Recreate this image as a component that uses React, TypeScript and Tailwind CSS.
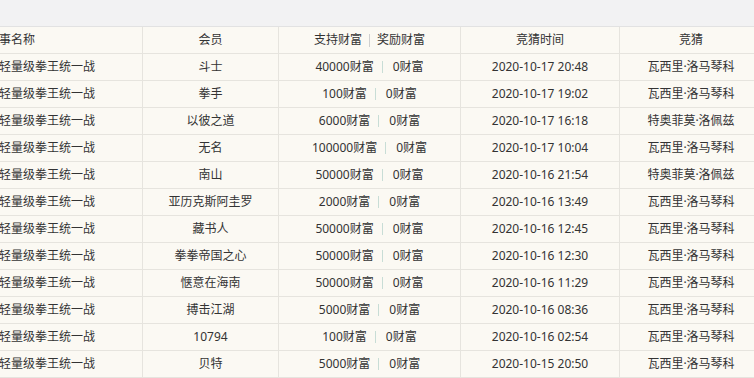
import React from "react";

type Row = { m: string; a: string; b: string; t: string; g: string };

const rows: Row[] = [
  { m: "斗士", a: "40000", b: "0", t: "2020-10-17 20:48", g: "瓦西里·洛马琴科" },
  { m: "拳手", a: "100", b: "0", t: "2020-10-17 19:02", g: "瓦西里·洛马琴科" },
  { m: "以彼之道", a: "6000", b: "0", t: "2020-10-17 16:18", g: "特奥菲莫·洛佩兹" },
  { m: "无名", a: "100000", b: "0", t: "2020-10-17 10:04", g: "瓦西里·洛马琴科" },
  { m: "南山", a: "50000", b: "0", t: "2020-10-16 21:54", g: "特奥菲莫·洛佩兹" },
  { m: "亚历克斯阿圭罗", a: "2000", b: "0", t: "2020-10-16 13:49", g: "瓦西里·洛马琴科" },
  { m: "藏书人", a: "50000", b: "0", t: "2020-10-16 12:45", g: "瓦西里·洛马琴科" },
  { m: "拳拳帝国之心", a: "50000", b: "0", t: "2020-10-16 12:30", g: "瓦西里·洛马琴科" },
  { m: "惬意在海南", a: "50000", b: "0", t: "2020-10-16 11:29", g: "瓦西里·洛马琴科" },
  { m: "搏击江湖", a: "5000", b: "0", t: "2020-10-16 08:36", g: "瓦西里·洛马琴科" },
  { m: "10794", a: "100", b: "0", t: "2020-10-16 02:54", g: "瓦西里·洛马琴科" },
  { m: "贝特", a: "5000", b: "0", t: "2020-10-15 20:50", g: "瓦西里·洛马琴科" },
];

const grid =
  "grid grid-cols-[170px_136px_182px_159px_143px] h-[27px] border-b border-[#e6e4de]";
const cell = "flex items-center justify-center border-r border-[#e6e4de] whitespace-nowrap";

export default function App() {
  return (
    <div
      className="w-[754px] h-[378px] overflow-hidden bg-[#f2f2f3] text-[12px] text-[#333]"
      style={{ fontFamily: '"Noto Sans", "Noto Sans CJK SC", sans-serif' }}
    >
      <div className="h-[26px]" />
      <div className="-ml-[27px] w-[790px] bg-[#fbf9f3] border-t border-[#e2e2e2]">
        <div className={grid}>
          <div className="flex items-center pl-[14px] border-r border-[#e6e4de] whitespace-nowrap">赛事名称</div>
          <div className={cell}>会员</div>
          <div className={cell}>
            <span>支持财富</span>
            <span className="mx-[7px] w-px h-[13px] bg-[#cfcfcf]" />
            <span>奖励财富</span>
          </div>
          <div className={cell}>竞猜时间</div>
          <div className={cell}>竞猜</div>
        </div>
        {rows.map((r, i) => (
          <div key={i} className={grid}>
            <div className="flex items-center pl-[14px] border-r border-[#e6e4de] whitespace-nowrap">超轻量级拳王统一战</div>
            <div className={cell}>{r.m}</div>
            <div className={cell}>
              <span>{r.a}财富</span>
              <span className="ml-[8px] mr-[10px] w-px h-[12px] bg-[#c8ddd6]" />
              <span>{r.b}财富</span>
            </div>
            <div className={cell}>{r.t}</div>
            <div className={cell}>{r.g}</div>
          </div>
        ))}
      </div>
    </div>
  );
}
